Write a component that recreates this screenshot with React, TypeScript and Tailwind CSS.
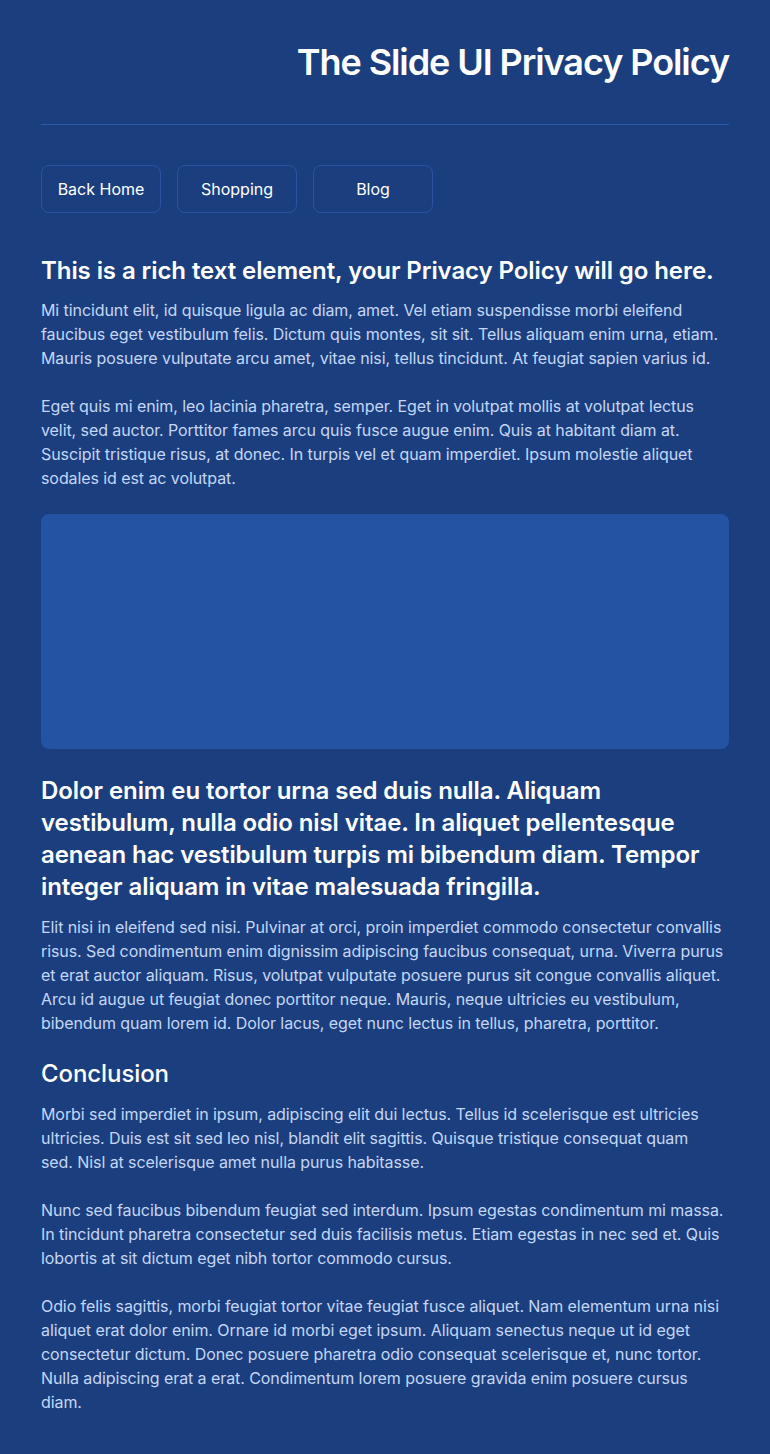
export default function App() {
  const font = { fontFamily: 'Inter, "Noto Sans", sans-serif' };
  return (
    <div className="min-h-[1454px] w-full bg-[#1b3f7e] px-[41px] pt-[42px] pb-[41px]" style={font}>
      {/* Header */}
      <h1 className="text-right text-[36px] leading-[40px] font-semibold tracking-[-0.03em] text-white">
        The Slide UI Privacy Policy
      </h1>
      <div className="mt-[42px] h-px bg-[#2a5aac]" />

      {/* Nav */}
      <nav className="mt-[40px] flex gap-4">
        {['Back Home', 'Shopping', 'Blog'].map((label) => (
          <a
            key={label}
            href="#"
            className="flex h-12 w-[120px] items-center justify-center rounded-lg border border-[#2a52a0] text-base text-white"
          >
            {label}
          </a>
        ))}
      </nav>

      {/* Content */}
      <article className="text-[#c4d6f6] tracking-[-0.005em]">
        <h2 className="mt-[42px] mb-[11px] text-[24px] leading-[32px] font-semibold text-white">
          This is a rich text element, your Privacy Policy will go here.
        </h2>
        <p className="text-base leading-6">
          Mi tincidunt elit, id quisque ligula ac diam, amet. Vel etiam suspendisse morbi eleifend faucibus eget
          vestibulum felis. Dictum quis montes, sit sit. Tellus aliquam enim urna, etiam. Mauris posuere vulputate arcu
          amet, vitae nisi, tellus tincidunt. At feugiat sapien varius id.
        </p>
        <p className="mt-6 text-base leading-6">
          Eget quis mi enim, leo lacinia pharetra, semper. Eget in volutpat mollis at volutpat lectus velit, sed auctor.
          Porttitor fames arcu quis fusce augue enim. Quis at habitant diam at. Suscipit tristique risus, at donec. In
          turpis vel et quam imperdiet. Ipsum molestie aliquet sodales id est ac volutpat.
        </p>

        <div className="mt-6 h-[235px] rounded-lg bg-[#2353a2]" />

        <h2 className="mt-[26px] mb-3 text-[24px] leading-[32px] font-semibold text-white">
          Dolor enim eu tortor urna sed duis nulla. Aliquam vestibulum, nulla odio nisl vitae. In aliquet pellentesque
          aenean hac vestibulum turpis mi bibendum diam. Tempor integer aliquam in vitae malesuada fringilla.
        </h2>
        <p className="text-base leading-6">
          Elit nisi in eleifend sed nisi. Pulvinar at orci, proin imperdiet commodo consectetur convallis risus. Sed
          condimentum enim dignissim adipiscing faucibus consequat, urna. Viverra purus et erat auctor aliquam. Risus,
          volutpat vulputate posuere purus sit congue convallis aliquet. Arcu id augue ut feugiat donec porttitor neque.
          Mauris, neque ultricies eu vestibulum, bibendum quam lorem id. Dolor lacus, eget nunc lectus in tellus,
          pharetra, porttitor.
        </p>

        <h3 className="mt-[23px] mb-3 text-[24px] leading-[32px] font-medium text-white">Conclusion</h3>
        <p className="pr-2 text-base leading-6">
          Morbi sed imperdiet in ipsum, adipiscing elit dui lectus. Tellus id scelerisque est ultricies ultricies. Duis
          est sit sed leo nisl, blandit elit sagittis. Quisque tristique consequat quam sed. Nisl at scelerisque amet
          nulla purus habitasse.
        </p>
        <p className="mt-6 text-base leading-6">
          Nunc sed faucibus bibendum feugiat sed interdum. Ipsum egestas condimentum mi massa. In tincidunt pharetra
          consectetur sed duis facilisis metus. Etiam egestas in nec sed et. Quis lobortis at sit dictum eget nibh
          tortor commodo cursus.
        </p>
        <p className="mt-6 text-base leading-6">
          Odio felis sagittis, morbi feugiat tortor vitae feugiat fusce aliquet. Nam elementum urna nisi aliquet erat
          dolor enim. Ornare id morbi eget ipsum. Aliquam senectus neque ut id eget consectetur dictum. Donec posuere
          pharetra odio consequat scelerisque et, nunc tortor. Nulla adipiscing erat a erat. Condimentum lorem posuere
          gravida enim posuere cursus diam.
        </p>
      </article>
    </div>
  );
}
